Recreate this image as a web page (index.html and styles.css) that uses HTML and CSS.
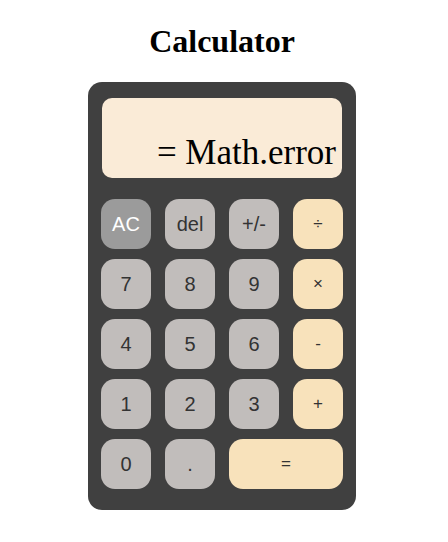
FILE: index.html
```html
<!DOCTYPE html>
<html>
<head>
<meta charset="utf-8">
<link rel="stylesheet" href="styles.css">
</head>
<body>
<div class="page">
  <h1 class="title">Calculator</h1>
  <div class="calc">
    <div class="display"><span class="result">= Math.error</span></div>
    <div class="keys">
      <button class="key key-ac">AC</button>
      <button class="key">del</button>
      <button class="key">+/-</button>
      <button class="key key-op">÷</button>
      <button class="key">7</button>
      <button class="key">8</button>
      <button class="key">9</button>
      <button class="key key-op">×</button>
      <button class="key">4</button>
      <button class="key">5</button>
      <button class="key">6</button>
      <button class="key key-op">-</button>
      <button class="key">1</button>
      <button class="key">2</button>
      <button class="key">3</button>
      <button class="key key-op">+</button>
      <button class="key">0</button>
      <button class="key">.</button>
      <button class="key key-op key-wide">=</button>
    </div>
  </div>
</div>
</body>
</html>
```
FILE: styles.css
```css
html, body {
  margin: 0;
  padding: 0;
  background: #ffffff;
}
.page {
  width: 444px;
  display: flex;
  flex-direction: column;
  align-items: center;
}
.title {
  font-family: "Liberation Serif", "Times New Roman", serif;
  font-weight: bold;
  font-size: 32px;
  line-height: 37px;
  margin: 23px 0 22px;
  color: #000;
}
.calc {
  width: 268px;
  box-sizing: border-box;
  padding: 16px 13px 21px;
  background: #404040;
  border-radius: 14px;
}
.display {
  height: 80px;
  margin: 0 1px 21px;
  background: #faebd7;
  border-radius: 10px;
  display: flex;
  align-items: flex-end;
  justify-content: flex-end;
  padding: 0 6px 5px 0;
  box-sizing: border-box;
  overflow: hidden;
}
.result {
  font-family: "Liberation Serif", "Times New Roman", serif;
  font-size: 35px;
  line-height: 40px;
  color: #000;
  white-space: nowrap;
}
.keys {
  display: grid;
  grid-template-columns: repeat(4, 50px);
  grid-auto-rows: 50px;
  column-gap: 14px;
  row-gap: 10px;
}
.key {
  border: none;
  margin: 0;
  padding: 0;
  border-radius: 14px;
  background: #c1bdbb;
  color: #333333;
  font-family: "Liberation Sans", Arial, sans-serif;
  font-size: 20px;
  display: flex;
  align-items: center;
  justify-content: center;
}
.key-ac {
  background: #9b9b9b;
  color: #ffffff;
}
.key-op {
  background: #f8e2bb;
  font-size: 17px;
}
.key-wide {
  grid-column: span 2;
}
```
